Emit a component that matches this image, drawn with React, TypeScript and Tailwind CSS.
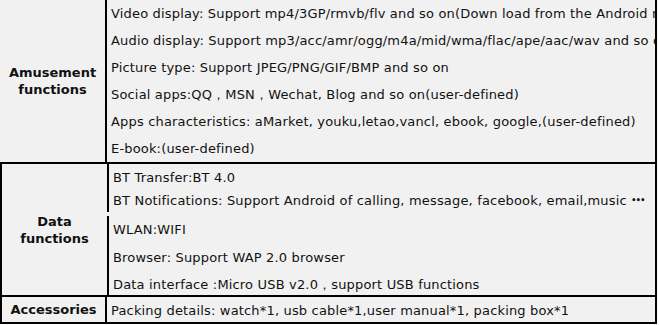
const font = { fontFamily: '"DejaVu Sans", Verdana, sans-serif' };

function Line({ children, className = "" }: { children: React.ReactNode; className?: string }) {
  return <div className={`whitespace-nowrap pl-[4px] tracking-[0.17px] ${className}`}>{children}</div>;
}

export default function App() {
  return (
    <div className="h-[325px] w-[659px] bg-white text-[13px] text-[#111]" style={font}>
      <div className="w-[657px] bg-[#f1f1f1]">
        {/* Amusement */}
        <div className="flex h-[164px] border-b-2 border-black">
          <div className="flex w-[107px] shrink-0 items-center justify-center border-r-2 border-black text-center font-bold leading-[17px]">
            Amusement
            <br />
            functions
          </div>
          <div className="min-w-0 flex-1 overflow-hidden border-r-2 border-black leading-[27px]">
            <Line>Video display: Support mp4/3GP/rmvb/flv and so on(Down load from the Android market)</Line>
            <Line>Audio display: Support mp3/acc/amr/ogg/m4a/mid/wma/flac/ape/aac/wav and so on</Line>
            <Line>Picture type: Support JPEG/PNG/GIF/BMP and so on</Line>
            <Line>Social apps:QQ，MSN，Wechat, Blog and so on(user-defined)</Line>
            <Line>Apps characteristics: aMarket, youku,letao,vancl, ebook, google,(user-defined)</Line>
            <Line>E-book:(user-defined)</Line>
          </div>
        </div>

        {/* Data */}
        <div className="flex h-[133px] border-b-2 border-l-2 border-black">
          <div className="flex w-[105px] shrink-0 items-center justify-center text-center font-bold leading-[17px]">
            Data
            <br />
            functions
          </div>
          <div className="flex w-[2px] shrink-0 flex-col">
            <div className="h-[48px] bg-black" />
            <div className="h-[4px]" />
            <div className="flex-1 bg-black" />
          </div>
          <div className="min-w-0 flex-1 overflow-hidden border-r-2 border-black leading-[22px]">
            <Line className="mt-[3px]">BT Transfer:BT 4.0</Line>
            <Line className="mt-[1px]">
              BT Notifications: Support Android of calling, message, facebook, email,music{" "}
              <span className="relative -top-[2px] text-[8px] font-bold tracking-[-0.5px]">•••</span>
            </Line>
            <Line className="mt-[5px]">WLAN:WIFI</Line>
            <Line className="mt-[6px]">Browser: Support WAP 2.0 browser</Line>
            <Line className="mt-[5px]">Data interface :Micro USB v2.0，support USB functions</Line>
          </div>
        </div>

        {/* Accessories */}
        <div className="flex h-[27px] border-b-2 border-l-2 border-black">
          <div className="flex w-[105px] shrink-0 items-center justify-center border-r-2 border-black font-bold">
            Accessories
          </div>
          <div className="min-w-0 flex-1 overflow-hidden border-r-2 border-black pt-[2px] leading-[23px]">
            <Line>Packing details: watch*1, usb cable*1,user manual*1, packing box*1</Line>
          </div>
        </div>
      </div>
    </div>
  );
}
